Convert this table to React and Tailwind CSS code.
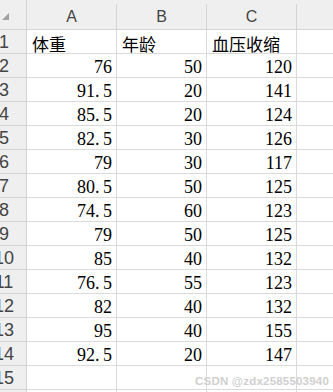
import React from "react";

const rows = [
    ["76", "50", "120"],
    ["91.5", "20", "141"],
    ["85.5", "20", "124"],
    ["82.5", "30", "126"],
    ["79", "30", "117"],
    ["80.5", "50", "125"],
    ["74.5", "60", "123"],
    ["79", "50", "125"],
    ["85", "40", "132"],
    ["76.5", "55", "123"],
    ["82", "40", "132"],
    ["95", "40", "155"],
    ["92.5", "20", "147"],
];

const serif = "font-['Liberation_Serif','Noto_Sans_CJK_SC',serif]";
const cjk = "font-['Noto_Sans_CJK_SC',sans-serif]";
const sans = "font-['Liberation_Sans','Noto_Sans',sans-serif]";

// SimSun-like decimal: the point takes a wide slot
function Decimal({ value }) {
    const [a, b] = value.split(".");
    if (b === undefined) return <span>{a}</span>;
    return (
        <span>
            {a}
            <span className="inline-block w-[8px]">.</span>
            {b}
        </span>
    );
}

function RowHead({ n }) {
    return (
        <div className="h-[24px] overflow-hidden bg-[#efefef] border-r border-b border-[#d4d4d4] flex items-center">
            <div className={`w-[40px] -ml-[16px] shrink-0 text-center text-[18px] leading-none text-[#444] ${sans}`}>
                {n}
            </div>
        </div>
    );
}

function Cell({ children, right, className = "" }) {
    return (
        <div
            className={`h-[24px] border-r border-b border-[#dadada] bg-white flex items-end overflow-visible whitespace-nowrap pb-[1px] ${
                right ? "justify-end pr-[4px]" : "pl-[5px]"
            } ${className}`}
        >
            {children}
        </div>
    );
}

export default function App() {
    return (
        <div className="relative w-[333px] h-[392px] overflow-hidden bg-white">
            <div className="grid grid-cols-[27px_90px_90px_90px_1fr]">
                {/* Header */}
                <div className="h-[30px] bg-[#efefef] border-r border-b border-[#d4d4d4] flex items-start">
                    <svg width="8" height="8" viewBox="0 0 8 8" className="mt-[13px] ml-[2px]">
                        <polygon points="7,0 7,7 0,7" fill="#a0a0a0" />
                    </svg>
                </div>
                {["A", "B", "C", ""].map((l, i) => (
                    <div key={i} className="h-[30px] bg-[#efefef] border-b border-[#d4d4d4] pt-[4px]">
                        <div
                            className={`h-full flex items-center justify-center text-[16px] text-[#444] ${sans} ${
                                i < 3 ? "border-r border-[#d4d4d4]" : ""
                            }`}
                        >
                            {l}
                        </div>
                    </div>
                ))}

                {/* Row 1 */}
                <RowHead n={1} />
                <Cell className={`text-[17px] leading-none text-black ${cjk}`}>体重</Cell>
                <Cell className={`text-[17px] leading-none text-black ${cjk}`}>年龄</Cell>
                <Cell className={`text-[17px] leading-none text-black ${cjk}`}>血压收缩</Cell>
                <div className="h-[24px] border-b border-[#dadada]" />

                {rows.map((r, i) => (
                    <React.Fragment key={i}>
                        <RowHead n={i + 2} />
                        <Cell right className={`text-[18px] leading-none text-black ${serif}`}>
                            <Decimal value={r[0]} />
                        </Cell>
                        <Cell right className={`text-[18px] leading-none text-black ${serif}`}>
                            {r[1]}
                        </Cell>
                        <Cell right className={`text-[18px] leading-none text-black ${serif}`}>
                            {r[2]}
                        </Cell>
                        <div className="h-[24px] border-b border-[#dadada]" />
                    </React.Fragment>
                ))}

                {/* Row 15 and part of 16 */}
                {[15, 16].map((n) => (
                    <React.Fragment key={n}>
                        <RowHead n={n} />
                        <Cell />
                        <Cell />
                        <Cell />
                        <div className="h-[24px] border-b border-[#dadada]" />
                    </React.Fragment>
                ))}
            </div>

            <div
                className={`absolute right-[4px] top-[373px] text-[11.5px] font-bold tracking-[0.2px] text-[#cfcfcf] ${sans}`}
            >
                CSDN @zdx2585503940
            </div>
        </div>
    );
}
